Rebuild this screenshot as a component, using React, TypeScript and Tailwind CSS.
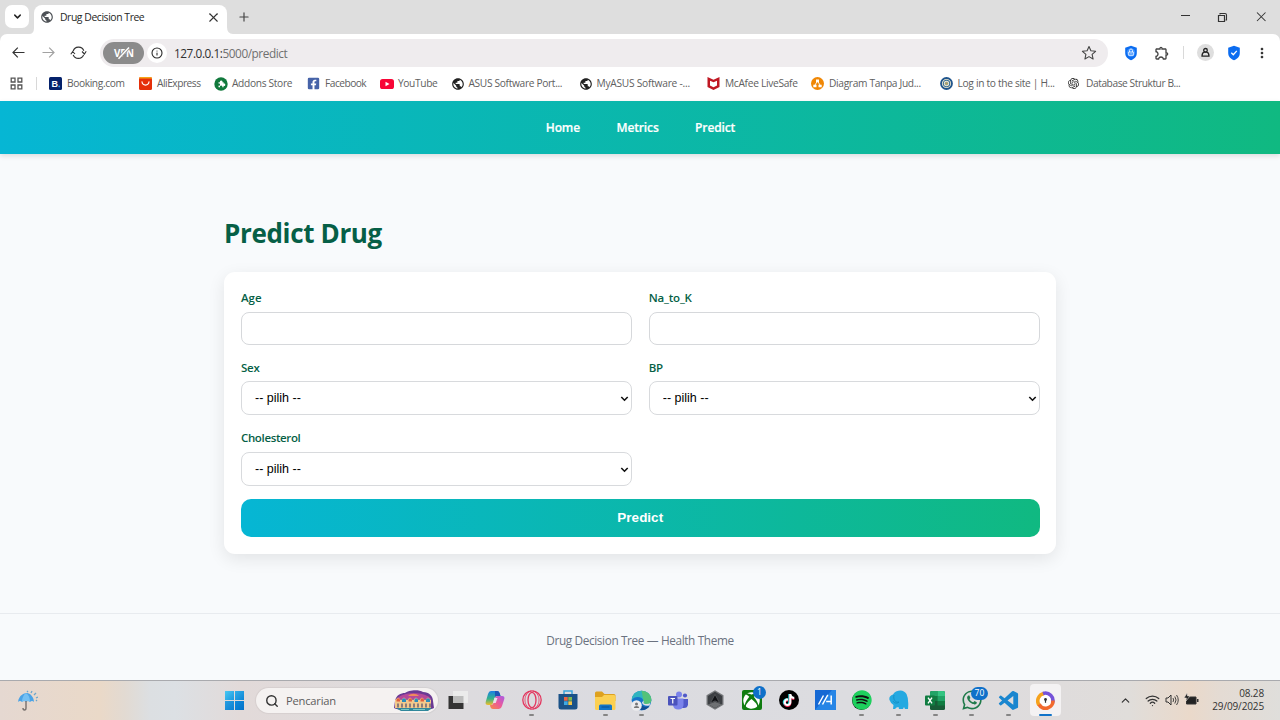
import React from "react";
import { MdPublic, MdOutlineExtension, MdMoreVert } from "react-icons/md";
import { FaFacebookSquare, FaSpotify, FaTiktok, FaWhatsapp, FaXbox } from "react-icons/fa";
import { SiOpenai } from "react-icons/si";
import { BiLogoVisualStudio } from "react-icons/bi";
import { ChevronDown, ChevronUp, Info, Plus, Search, Wifi, X } from "lucide-react";

function TabStrip() {
  return (
    <div className="flex h-[34px] shrink-0 bg-[#dedede] pl-[5px]">
      <div className="mt-[5px] flex h-[23px] w-[24px] items-center justify-center rounded-[7px] bg-white">
        <ChevronDown size={11} strokeWidth={3.2} className="text-[#222]" />
      </div>
      <svg width="5" height="34" viewBox="0 0 5 34" className="block">
        <path d="M5 28 Q5 34 0 34 H5Z" fill="#fff" />
      </svg>
      <div className="mt-[5px] flex h-[29px] w-[193px] items-center rounded-t-[8px] bg-white pr-[6px] pb-[5px] pl-[6px]">
        <MdPublic size={14} className="shrink-0 text-[#4d5156]" />
        <span className="ml-[6px] flex-1 pt-px text-[10.400px] tracking-[-0.430px] whitespace-nowrap text-[#262626]">Drug Decision Tree</span>
        <X size={15} strokeWidth={1.700} className="text-[#333]" />
      </div>
      <svg width="6" height="34" viewBox="0 0 6 34" className="block">
        <path d="M0 27 Q0 34 6 34 H0Z" fill="#fff" />
      </svg>
      <Plus size={14} strokeWidth={2} className="mt-[10px] ml-[4px] text-[#444]" />
      <div className="mr-[4px] ml-auto flex h-[33px] items-center">
        <svg width="96" height="14" viewBox="0 0 96 14" fill="none" stroke="#333">
          <path d="M1 5.500h9" strokeWidth="1" />
          <path d="M38.500 5.500h6v6h-6z" strokeWidth="1.200" />
          <path d="M40 4.500V3.500h5a1.500 1.500 0 0 1 1.500 1.500V10h-1" strokeWidth="1.100" />
          <path d="M77 2.500l8.500 8.500M85.500 2.500l-8.500 8.500" strokeWidth="1.050" />
        </svg>
      </div>
    </div>
  );
}

function ShieldPath({ children }: { children: React.ReactNode }) {
  return (
    <svg width="14" height="16" viewBox="0 0 14 16">
      <path d="M7 .8 12.800 2.800V8c0 3.600-2.400 6-5.800 7.200C3.600 14 1.200 11.600 1.200 8V2.800Z" fill="#0b6cf0" />
      {children}
    </svg>
  );
}

function AddressBar() {
  return (
    <div className="flex h-[37px] shrink-0 items-center rounded-t-[7px] bg-white">
      <svg width="100" height="20" viewBox="0 0 100 20" fill="none" strokeWidth="1.200">
        <path d="M24.500 9.500h-11.500m4.800-4.800-4.800 4.800 4.800 4.800" stroke="#333" />
        <path d="M42.500 9.500h11.500m-4.800-4.800 4.800 4.800-4.800 4.800" stroke="#a2a2a2" />
        <path d="M73.200 8.200A5.600 5.600 0 0 1 83.800 7.700M83.600 11.900A5.600 5.600 0 0 1 73.200 11.900" stroke="#333" />
        <path d="m82 8.500 2.400 2.500 1.800-2.700M70.800 11.200l1.900-2.700 2.300 2.500" stroke="#333" strokeWidth="1.100" />
      </svg>
      <div className="flex h-[28px] w-[1008px] items-center rounded-full bg-[#efecee] pl-[3px]">
        <div className="flex h-[22px] w-[41px] items-center justify-center rounded-full bg-[#8b8b8b]">
          <svg width="24" height="14" viewBox="0 0 24 14">
            <text x="12" y="11" textAnchor="middle" fontFamily="Open Sans" fontWeight="700" fontSize="9.800" fill="#fff" textLength="20">VPN</text>
            <path d="M6.500 12.800 17 1.500" stroke="#8b8b8b" strokeWidth="3" />
            <path d="M6.500 12.800 17 1.500" stroke="#fff" strokeWidth="1.500" />
          </svg>
        </div>
        <div className="ml-[3px] flex h-[20px] w-[20px] items-center justify-center rounded-full bg-white">
          <Info size={12} strokeWidth={2.200} className="text-[#2b2b2b]" />
        </div>
        <div className="ml-[7px] flex-1 pt-[2px] text-[11.800px] tracking-[-0.440px] text-[#707070]">
          <span className="text-[#303030]">127.0.0.1:</span>5000/predict
        </div>
        <svg width="16" height="16" viewBox="0 0 16 16" className="mr-[11px]" fill="none" stroke="#444" strokeWidth="1.100" strokeLinejoin="round">
          <path d="m8 1.500 1.900 4.300 4.700.5-3.500 3.100 1 4.600L8 11.600 3.900 14l1-4.600L1.400 6.300l4.700-.5Z" />
        </svg>
      </div>
      <div className="ml-[15.500px] flex items-center">
        <ShieldPath>
          <circle cx="7" cy="7.500" r="4.200" fill="#3d91ff" />
          <path d="M5.500 7V5.500a1.500 1.500 0 0 1 3 0V7M4.700 7h4.600v3.300H4.700zM7 8.200v1" stroke="#fff" fill="none" strokeWidth=".8" />
        </ShieldPath>
        <MdOutlineExtension size={16} className="ml-[16px] text-[#444]" />
        <div className="ml-[13px] h-[13px] w-px bg-[#d9d9d9]" />
        <div className="ml-[13.500px] flex h-[17px] w-[17px] items-center justify-center rounded-full bg-[#dedede]">
          <svg width="11" height="11" viewBox="0 0 11 11" fill="none" stroke="#222" strokeWidth="1.300">
            <circle cx="5.500" cy="3.300" r="1.800" />
            <path d="M4.200 5.200C2.400 5.700 2 7 2 9.200h7C9 7 8.600 5.700 6.800 5.200Z" />
          </svg>
        </div>
        <div className="ml-[12.500px]">
          <ShieldPath>
            <path d="m4.300 7.700 2 2 3.500-3.800" stroke="#fff" fill="none" strokeWidth="1.300" />
          </ShieldPath>
        </div>
        <MdMoreVert size={16} className="ml-[13.500px] text-[#333]" />
      </div>
    </div>
  );
}

const bookmarks = [
  {
    label: "Booking.com",
    box: "w-[90px]",
    text: "tracking-[-0.380px]",
    icon: (
      <svg width="13" height="13" viewBox="0 0 13 13">
        <rect width="13" height="13" rx="1.500" fill="#05226b" />
        <text x="2.500" y="10" fontFamily="Liberation Sans" fontWeight="700" fontSize="9" fill="#fff">B</text>
        <circle cx="10.200" cy="9.400" r=".9" fill="#33a5ef" />
      </svg>
    ),
  },
  {
    label: "AliExpress",
    box: "w-[75px]",
    text: "tracking-[-0.480px]",
    icon: (
      <svg width="13" height="13" viewBox="0 0 13 13">
        <rect width="13" height="13" rx="1.500" fill="#e52f0a" />
        <path d="M0 3V1.500Q0 0 1.500 0h10Q13 0 13 1.500V3Z" fill="#f6a417" />
        <rect y="1.500" width="13" height="5" rx="1" fill="#e52f0a" />
        <path d="M3 4.800c.5 4.300 6.500 4.300 7 0" stroke="#fff" strokeWidth="1.200" fill="none" strokeLinecap="round" />
      </svg>
    ),
  },
  {
    label: "Addons Store",
    box: "w-[93px]",
    text: "tracking-[-0.320px]",
    icon: (
      <svg width="14" height="14" viewBox="0 0 14 14">
        <circle cx="7" cy="7" r="6.700" fill="#11793c" />
        <path d="M4.500 5.300h1.500a1.300 1.300 0 1 1 2.400 0H9.600v1.300a1.200 1.200 0 1 1 0 2.200v1.400H8.200a1.200 1.200 0 1 0-2.100 0H4.500V8.600a1.100 1.100 0 1 0 0-2Z" fill="#fff" />
      </svg>
    ),
  },
  { label: "Facebook", box: "w-[73px]", text: "tracking-[-0.520px]", icon: <FaFacebookSquare size={13} className="text-[#4663a8]" /> },
  {
    label: "YouTube",
    box: "w-[70.500px]",
    text: "tracking-[-0.350px]",
    icon: (
      <svg width="14" height="10" viewBox="0 0 14 10">
        <rect width="14" height="10" rx="2.600" fill="#f80536" />
        <path d="m5.500 2.800 4 2.200-4 2.200Z" fill="#fff" />
      </svg>
    ),
  },
  { label: "ASUS Software Port...", box: "w-[128px]", text: "tracking-[-0.330px]", icon: <MdPublic size={14} className="text-[#222]" /> },
  { label: "MyASUS Software -...", box: "w-[128.500px]", text: "tracking-[-0.240px]", icon: <MdPublic size={14} className="text-[#222]" /> },
  {
    label: "McAfee LiveSafe",
    box: "w-[104px]",
    text: "tracking-[-0.300px]",
    icon: (
      <svg width="13" height="13" viewBox="0 0 13 13">
        <path d="M.5 0 6.500 2.800 12.500 0v10L6.500 13 .5 10ZM3 3.700v4.700l3.500 1.800L10 8.400V3.700L6.500 5.300Z" fill="#c01823" fillRule="evenodd" />
      </svg>
    ),
  },
  {
    label: "Diagram Tanpa Jud...",
    box: "w-[128.500px]",
    text: "tracking-[-0.330px]",
    icon: (
      <svg width="13" height="13" viewBox="0 0 13 13">
        <circle cx="6.500" cy="6.500" r="6.500" fill="#f08705" />
        <path d="M5 2.500h3v2.700H5zM2.300 7.700h3.200v2.600H2.300zM7.500 7.700h3.200v2.600H7.500z" fill="#fff" />
        <path d="M6.500 4 4 8m2.500-4L9 8" stroke="#fff" strokeWidth=".9" />
      </svg>
    ),
  },
  {
    label: "Log in to the site | H...",
    box: "w-[128.500px]",
    text: "tracking-[-0.310px]",
    icon: (
      <svg width="13" height="13" viewBox="0 0 13 13" fill="none">
        <circle cx="6.500" cy="6.500" r="5.500" fill="#f3ead0" stroke="#1f548c" strokeWidth="1.800" />
        <circle cx="6.500" cy="6.500" r="3.200" stroke="#3a7097" strokeWidth="1.100" />
        <circle cx="6.500" cy="6.500" r="1.300" fill="#c9a64a" stroke="#3a7097" strokeWidth=".5" />
      </svg>
    ),
  },
  { label: "Database Struktur B...", box: "w-[128px]", text: "tracking-[-0.430px]", icon: <SiOpenai size={11} className="text-[#222]" /> },
];

function BookmarkBar() {
  return (
    <div className="flex h-[29.500px] shrink-0 items-center bg-white pb-[4px] pl-[10px]">
      <svg width="13" height="13" viewBox="0 0 13 13" fill="none" stroke="#555" strokeWidth="1.300">
        <path d="M1.200 1.200h3.800v3.800H1.200zM8 1.200h3.800v3.800H8zM1.200 8h3.800v3.800H1.200zM8 8h3.800v3.800H8z" />
      </svg>
      <div className="mr-[12px] ml-[13px] h-[13px] w-px bg-[#d8d8d8]" />
      {bookmarks.map((b) => (
        <div key={b.label} className={`flex shrink-0 items-center ${b.box}`}>
          <span className="flex w-[18px] shrink-0">{b.icon}</span>
          <span className={`text-[10.200px] whitespace-nowrap text-[#606060] ${b.text}`}>{b.label}</span>
        </div>
      ))}
    </div>
  );
}

function Field({ label, select, labelBox }: { label: string; select?: boolean; labelBox: string }) {
  return (
    <label className="block">
      <span className={`block text-[11.500px] leading-[18px] font-semibold text-[#065f46] ${labelBox}`}>{label}</span>
      {select ? (
        <span className="relative block">
          <select className="block h-[34px] w-full appearance-none rounded-[8px] border border-[#d8dadd] bg-white px-[13px] pt-[2px] font-['Liberation_Sans',sans-serif] text-[12.500px] text-black">
            <option>-- pilih --</option>
          </select>
          <svg width="9" height="6" viewBox="0 0 9 6" fill="none" className="absolute top-[15px] right-[3px]">
            <path d="m1.300 1 3.200 3.200L7.700 1" stroke="#111" strokeWidth="1.600" />
          </svg>
        </span>
      ) : (
        <input className="block h-[33px] w-full rounded-[8px] border border-[#d6d8db] bg-white px-3" />
      )}
    </label>
  );
}

function Page() {
  return (
    <div className="flex min-h-0 flex-1 flex-col bg-[#f8fafc]">
      <nav className="flex h-[53.500px] shrink-0 items-center justify-center gap-[36.500px] bg-[linear-gradient(90deg,#06b6d4,#10b981)] pt-[1.500px] pl-px text-[12px] font-semibold text-white shadow-[0_2px_5px_rgba(0,0,0,0.12)] [-webkit-text-stroke:0.2px_white]">
        <a className="tracking-[-0.130px]">Home</a>
        <a className="tracking-[-0.130px]">Metrics</a>
        <a className="tracking-[-0.130px]">Predict</a>
      </nav>
      <main className="mx-auto w-[832px] flex-1 pt-[60px]">
        <h1 className="h-[57.500px] text-[26px] leading-[38px] font-bold tracking-[-0.350px] text-[#065f46]">Predict Drug</h1>
        <form className="h-[282.500px] rounded-[11px] bg-white py-[17px] pr-[16.500px] pl-[17px] shadow-[0_5px_17px_rgba(0,0,0,0.09)]">
          <div className="grid grid-cols-2 gap-x-[17px] gap-y-[14px]">
            <Field label="Age" labelBox="mb-[5px] tracking-[0px]" />
            <Field label="Na_to_K" labelBox="mb-[5px] tracking-[-0.200px]" />
            <Field label="Sex" labelBox="mb-[4px] tracking-[-0.200px]" select />
            <Field label="BP" labelBox="mb-[4px] tracking-[-0.300px]" select />
            <Field label="Cholesterol" labelBox="mb-[5px] tracking-[-0.360px]" select />
          </div>
          <button
            type="button"
            className="mt-[13px] block h-[38.500px] w-full rounded-[10px] bg-[linear-gradient(90deg,#06b6d4,#10b981)] font-['Liberation_Sans',sans-serif] text-[13.500px] font-bold text-white"
          >
            Predict
          </button>
        </form>
      </main>
      <footer className="h-[67px] shrink-0 border-t border-[#e8ebef] pt-[17px] text-center text-[11.800px] leading-[18px] tracking-[-0.370px] text-[#6b7280]">
        Drug Decision Tree — Health Theme
      </footer>
    </div>
  );
}

function TaskIcon({ children, open, active }: { children: React.ReactNode; open?: boolean; active?: boolean }) {
  return (
    <div className="relative flex h-[32px] w-[36.700px] shrink-0 items-center justify-center">
      {active && <div className="absolute inset-x-[3px] inset-y-0 rounded-[4px] bg-[#f4f2f3]" />}
      <div className="relative flex">{children}</div>
      {open && <div className="absolute bottom-0 h-[2px] w-[5px] rounded-full bg-[#858585]" />}
      {active && <div className="absolute bottom-0 h-[2px] w-[13px] rounded-full bg-[#1173c9]" />}
    </div>
  );
}

function Badge({ children, box }: { children: React.ReactNode; box: string }) {
  return (
    <span className={`absolute flex h-[13px] items-center justify-center rounded-full bg-[#0f70c9] text-[8.500px] leading-none text-white ${box}`}>
      {children}
    </span>
  );
}

function SearchArt() {
  return (
    <svg width="42" height="22" viewBox="0 0 42 22">
      <path d="M2 11C3 5 8 3 12 3c3-3 14-4 18-1 6 0 10 4 10 9l1 7c-8 4-32 4-40 0Z" fill="#6b3a94" />
      <path d="M4 9c4-7 28-8 34 0Z" fill="#b5499a" />
      <path d="M15 6c3-3 8-3 11 0Z" fill="#f08a5c" />
      <path d="M2 18V10l3-2.500 3 2.500 3-2.500 3 2.500 3-2.500 3 2.500 3-2.500 3 2.500 3-2.500 3 2.500 3-2.500 3 2.500v8Z" fill="#f2c98c" />
      <path d="M3.500 11.500v-2L5 8l2 1.500v2zm12 0v-2L17 8l2 1.500v2zm12 0v-2L29 8l2 1.500v2z" fill="#e0603f" />
      <path d="M9 12V9.500L11 8l2 1.500V12zm12.500 0V9.500L23 8l2 1.500V12zm11.500 0V9.500L35 8l2 1.500V12z" fill="#2c8cbb" />
      <path d="M5 13.500v4m4-4v4m4-4v4m4-4v4m4-4v4m4-4v4m4-4v4m4-4v4m4-4v4" stroke="#4a4a70" strokeWidth="1.200" />
      <path d="M3 18h36l-4 3H8Z" fill="#30879b" />
      <path d="M8 19.500h8m4 0h12" stroke="#8ed7c9" strokeWidth=".8" />
    </svg>
  );
}

function Taskbar() {
  return (
    <div className="flex h-[40px] shrink-0 items-start border-t border-[#a9aaae] bg-[linear-gradient(90deg,#e5d8d1_0px,#ead9c8_100px,#e2dad2_125px,#dcdfe2_150px,#dce0e4_175px,#e2dad9_240px,#dedbdd_400px,#dbdbe0_600px,#dcdce0_850px,#dfdcdc_1060px,#e0ddda_1130px,#ead9ca_1190px,#e4dbd3_1220px,#dfdedb_1280px)]">
      <svg width="20" height="21" viewBox="0 0 20 21" className="mt-[9px] ml-[18px]">
        <path d="M0 12C1 5 6 3 9 3s7 4 7 9q-2-2-4 0-2-2-4 0-2-2-4 0-2-2-4 0Z" fill="#4ba3e6" />
        <path d="M4 12c0-4 2-8 4-9 3 2 4 5 4 9q-2-2-4 0-2-2-4 0Z" fill="#75c0f3" />
        <path d="M8 11v7q0 2-1.500 2T5 18" fill="none" stroke="#77706d" strokeWidth="1.400" />
        <path d="m9 2 1-1m3 2 1-2m2 4 2-2m0 5 2-1m-2 4 1-1" stroke="#6ca6cc" strokeWidth="1.300" />
      </svg>
      <div className="mt-[10px] ml-[187px] grid h-[19px] w-[19px] grid-cols-2 gap-px">
        <div className="bg-linear-to-br from-[#48c8f3] to-[#1898df]" />
        <div className="bg-linear-to-br from-[#30afe9] to-[#0c85d6]" />
        <div className="bg-linear-to-br from-[#279fe2] to-[#0c7fd2]" />
        <div className="bg-linear-to-br from-[#118bdc] to-[#0471c8]" />
      </div>
      <div className="mt-[7px] ml-[12px] flex h-[25px] w-[182px] items-center rounded-full bg-[#f5f2f1] pr-[3px] pl-[9px] shadow-[0_0_1px_1px_rgba(0,0,0,0.05)]">
        <Search size={14} strokeWidth={2.400} className="text-[#333]" />
        <span className="ml-[7px] flex-1 pt-px text-[11.200px] tracking-[-0.220px] text-[#5d5d5d]">Pencarian</span>
        <SearchArt />
      </div>
      <div className="mt-[3px] ml-[2px] flex">
        <TaskIcon>
          <svg width="20" height="20" viewBox="0 0 20 20">
            <path d="M.5 6h15v13H.5z" fill="#343434" />
            <path d="M5 1h15v12H5z" fill="#ebebeb" />
            <path d="M5 6h10.500v7H5z" fill="#bcbcbc" />
          </svg>
        </TaskIcon>
        <TaskIcon>
          <svg width="20" height="20" viewBox="0 0 20 20">
            <defs>
              <linearGradient id="cpA" x1="0" y1="0" x2="0" y2="1">
                <stop offset="0" stopColor="#1a80e5" />
                <stop offset=".55" stopColor="#34b38a" />
                <stop offset="1" stopColor="#f4bd28" />
              </linearGradient>
              <linearGradient id="cpB" x1="1" y1="0" x2="0" y2="1">
                <stop offset="0" stopColor="#a75be6" />
                <stop offset=".5" stopColor="#ec5a9a" />
                <stop offset="1" stopColor="#f78b42" />
              </linearGradient>
            </defs>
            <path d="M6 1h6q2 0 2.600 2l.9 3H12q-2 0-2.600 2L8 13q-.6 2-2.600 2H3q-3 0-2.300-3L3 4q.8-3 3-3Z" fill="url(#cpA)" />
            <path d="M14 19H8q-2 0-2.600-2L5 15h1q2 0 2.600-2L10 8q.6-2 2.600-2H17q3 0 2.300 3L17 16q-.8 3-3 3Z" fill="url(#cpB)" />
            <path d="M9.500 8h3L10.700 13H8Z" fill="#e8e2ea" />
            <path d="M10 1h2q2 0 2.600 2l.9 3H12q-1.400 0-2 1Z" fill="#1d55b7" />
          </svg>
        </TaskIcon>
        <TaskIcon open>
          <svg width="20" height="20" viewBox="0 0 20 20" fill="none" stroke="#e3375f" strokeWidth="1.300">
            <circle cx="10" cy="10" r="9.200" />
            <ellipse cx="10" cy="10" rx="4" ry="7.600" />
            <path d="M9 .8C4 3 3 7 3 10s1 7 6 9.200M11 .8C16 3 17 7 17 10s-1 7-6 9.200" strokeWidth=".8" />
          </svg>
        </TaskIcon>
        <TaskIcon>
          <svg width="20" height="20" viewBox="0 0 20 20">
            <path d="M6 4V1h8v3" fill="none" stroke="#3ba5dd" strokeWidth="1.500" />
            <path d="M.5 4h19v13q0 2.500-2.500 2.500H3Q.5 19.500.5 17Z" fill="#1b5288" />
            <path d="M6 7h3.700v3.700H6z" fill="#ec6542" />
            <path d="M10.300 7H14v3.700h-3.700z" fill="#82b94d" />
            <path d="M6 11.300h3.700V15H6z" fill="#40a9e2" />
            <path d="M10.300 11.300H14V15h-3.700z" fill="#f3c345" />
          </svg>
        </TaskIcon>
        <TaskIcon open>
          <svg width="21" height="19" viewBox="0 0 21 19">
            <path d="M0 2Q0 .5 1.500.5H7l2.500 2.500H19q1.500 0 1.500 1.500V10H0Z" fill="#dea11f" />
            <path d="M0 6h7l2-2h10q1.500 0 1.500 1.500v12q0 1.500-1.500 1.500H1.500Q0 19 0 17.500Z" fill="#fbd052" />
            <path d="M4 19v-4q0-1.500 1.500-1.500h10q1.500 0 1.500 1.500v4Z" fill="#1476c8" />
            <path d="M6.500 16h8" stroke="#0b579f" strokeWidth="1.200" />
          </svg>
        </TaskIcon>
        <TaskIcon open>
          <svg width="21" height="21" viewBox="0 0 21 21">
            <circle cx="10.500" cy="10.500" r="9.800" fill="#1674c9" />
            <path d="M.8 9C2-2 19-2 20.300 9c.5 4-2.300 5.500-6 5-2.500-.3-1.300-2-1.800-3.500C11 6 3 6 .8 10Z" fill="#2fb4c0" />
            <path d="M10.500.7C16 .7 20 4.500 20.300 9c.5 4-2.300 5.500-6 5-2.500-.3-1.300-2-1.800-3.500Z" fill="#63c85a" opacity=".7" />
            <path d="M9 10c-1 6 5 8 9.500 6q-2.500 4-8 4.200Q5 17 9 10Z" fill="#114e93" />
            <path d="M12.500 10.500c.5 1.500-.7 3.200 1.800 3.500q3 .3 5-1l-.8 2.500q-7 .8-7.500-3Z" fill="#dfe0e4" />
            <circle cx="5.500" cy="15.500" r="5.300" fill="#ececee" />
            <circle cx="5.500" cy="14" r="1.500" fill="#777" />
            <path d="M2.800 18q0-2 2.700-2t2.700 2Z" fill="#777" />
          </svg>
        </TaskIcon>
        <TaskIcon>
          <svg width="20" height="19" viewBox="0 0 20 19">
            <circle cx="11" cy="3.500" r="3" fill="#7b83eb" />
            <circle cx="17" cy="4.500" r="2.100" fill="#5059c9" />
            <path d="M13 8h7v5.500q-.5 3.500-4 3.500h-3Z" fill="#5059c9" />
            <path d="M5 7.500h10.500V14q-.5 4.500-5.200 4.500T5 14Z" fill="#7b83eb" />
            <rect y="5" width="9.500" height="9.500" rx="1" fill="#4b53bc" />
            <path d="M2.500 7.500H7M4.750 7.500v5" stroke="#fff" strokeWidth="1.200" />
          </svg>
        </TaskIcon>
        <TaskIcon>
          <svg width="20" height="20" viewBox="0 0 20 20">
            <path d="m10 .3 8.500 5v9.500l-8.500 5-8.500-5V5.300Z" fill="#77797c" />
            <path d="m10 1.800 7.200 4.200v8L10 18.200 2.800 14V6Z" fill="#3c3f43" />
            <path d="m10 4.500 4.500 8.500L10 10.800 5.500 13Z" fill="#111316" stroke="#808285" strokeWidth=".4" />
            <path d="M3.500 14.300 10 12l6.500 2.300-6.500 3.700Z" fill="#6e7073" />
          </svg>
        </TaskIcon>
        <TaskIcon>
          <span className="flex h-[20px] w-[20px] items-center justify-center rounded-[2px] bg-[#107c10]">
            <FaXbox size={17} className="text-white" />
          </span>
          <Badge box="-top-[4px] left-[11px] w-[13px]">1</Badge>
        </TaskIcon>
        <TaskIcon>
          <span className="relative flex h-[20px] w-[20px] items-center justify-center rounded-full bg-black">
            <FaTiktok size={12} className="absolute top-[3.500px] left-[3.500px] text-[#25e5e8]" />
            <FaTiktok size={12} className="absolute top-[4.500px] left-[4.500px] text-[#f62959]" />
            <FaTiktok size={12} className="absolute top-[4px] left-[4px] text-white" />
          </span>
        </TaskIcon>
        <TaskIcon>
          <svg width="21" height="20" viewBox="0 0 21 20">
            <rect width="21" height="20" fill="#1669d4" />
            <path d="M0 20 17 0h4v20Z" fill="#2685e6" />
            <path d="m3.500 14.500 5-9m-1 9 5-9h.7m-2 6h5M16.200 5.500v9" stroke="#fff" strokeWidth="1.500" fill="none" />
          </svg>
        </TaskIcon>
        <TaskIcon open>
          <span className="flex h-[19px] w-[19px] items-center justify-center rounded-full bg-[#111]">
            <FaSpotify size={20} className="shrink-0 text-[#1ed05d]" />
          </span>
        </TaskIcon>
        <TaskIcon open>
          <svg width="20" height="20" viewBox="0 0 20 20">
            <path d="M7 1.500q7-3 10.500 2.500Q20 9 19 19h-3l-1-2-1 2h-4l-.500-2-2 .5-1.500 1.500H4l.5-4q-2.500-1-4-5Q-.5 6 4 4.500 5 2.500 7 1.500Z" fill="#25a9e1" />
            <path d="M5 5c-1 4 1 8 5 7-2 2-5 1-6-1" stroke="#128abf" strokeWidth=".8" fill="none" />
          </svg>
        </TaskIcon>
        <TaskIcon open>
          <svg width="20" height="19" viewBox="0 0 20 19">
            <rect x="5" width="15" height="19" rx="1.500" fill="#185c37" />
            <path d="M5 1.500Q5 0 6.500 0H12.500v5H5Z" fill="#21a366" />
            <path d="M12.500 0h6Q20 0 20 1.500V5h-7.500Z" fill="#33c481" />
            <path d="M5 5h7.500v5H5z" fill="#107c41" />
            <path d="M12.500 5H20v5h-7.500z" fill="#21a366" />
            <path d="M12.500 10H20v4.500h-7.500z" fill="#107c41" />
            <rect y="4.500" width="10" height="10" rx="1" fill="#107c41" />
            <path d="m3 6.700 4 5.600m0-5.600-4 5.600" stroke="#fff" strokeWidth="1.400" />
          </svg>
        </TaskIcon>
        <TaskIcon open>
          <FaWhatsapp size={22} className="text-[#1f7a4a]" />
          <Badge box="-top-[2px] left-[10px] w-[17px]">70</Badge>
        </TaskIcon>
        <TaskIcon open>
          <BiLogoVisualStudio size={23} className="text-[#1a86cf]" />
        </TaskIcon>
        <TaskIcon active>
          <svg width="19" height="19" viewBox="0 0 19 19" fill="none">
            <circle cx="9.500" cy="9.500" r="7" fill="#fff" />
            <path d="M3 14A7.500 7.500 0 0 1 8 2.500" stroke="#f5a21d" strokeWidth="3.600" />
            <path d="M7 2.500a7.500 7.500 0 0 1 9.500 9.500" stroke="#7652d8" strokeWidth="3.600" />
            <path d="M17 9.500a7.500 7.500 0 0 1-14 4" stroke="#f26a2e" strokeWidth="3.600" />
            <path d="m9.500 5 4 1.500v3q0 3-4 5-4-2-4-5v-3Z" fill="#fff" />
            <circle cx="9.500" cy="8.500" r="1.400" fill="#333" />
            <path d="M9.500 8.500v3.300" stroke="#333" strokeWidth="1.200" />
          </svg>
        </TaskIcon>
      </div>
      <ChevronUp size={13} strokeWidth={2.200} className="mt-[13px] ml-[55px] text-[#333]" />
      <Wifi size={15} strokeWidth={2} className="mt-[12px] ml-[13px] text-[#333]" />
      <svg width="14" height="14" viewBox="0 0 14 14" className="mt-[12px] ml-[5px]" fill="none" stroke="#333">
        <path d="M1 5h2l3-3v10L3 9H1Z" />
        <path d="M8 5q1.200 2 0 4M9.800 3.500q2.500 3.500 0 7M11.500 2q3.500 5 0 10" strokeWidth=".9" />
      </svg>
      <svg width="15" height="13" viewBox="0 0 15 13" className="mt-[12px] ml-[5px]">
        <path d="M2.500 4h9.500v7H2.500z" fill="#222" stroke="#333" />
        <path d="M13 6h1.500v3H13z" fill="#333" />
        <path d="m3 0-3 5h2.500L2 8l4-5H3.500Z" fill="#222" stroke="#e3dbd5" strokeWidth=".6" />
      </svg>
      <div className="mt-[6px] mr-[16px] ml-auto text-right text-[10px] leading-[13px] tracking-[-0.130px] text-[#333]">
        <div>08.28</div>
        <div>29/09/2025</div>
      </div>
    </div>
  );
}

export default function App() {
  return (
    <div className="flex h-[720px] w-[1280px] flex-col overflow-hidden bg-[#dedede] font-['Open_Sans','Noto_Sans',sans-serif]">
      <TabStrip />
      <AddressBar />
      <BookmarkBar />
      <Page />
      <Taskbar />
    </div>
  );
}
